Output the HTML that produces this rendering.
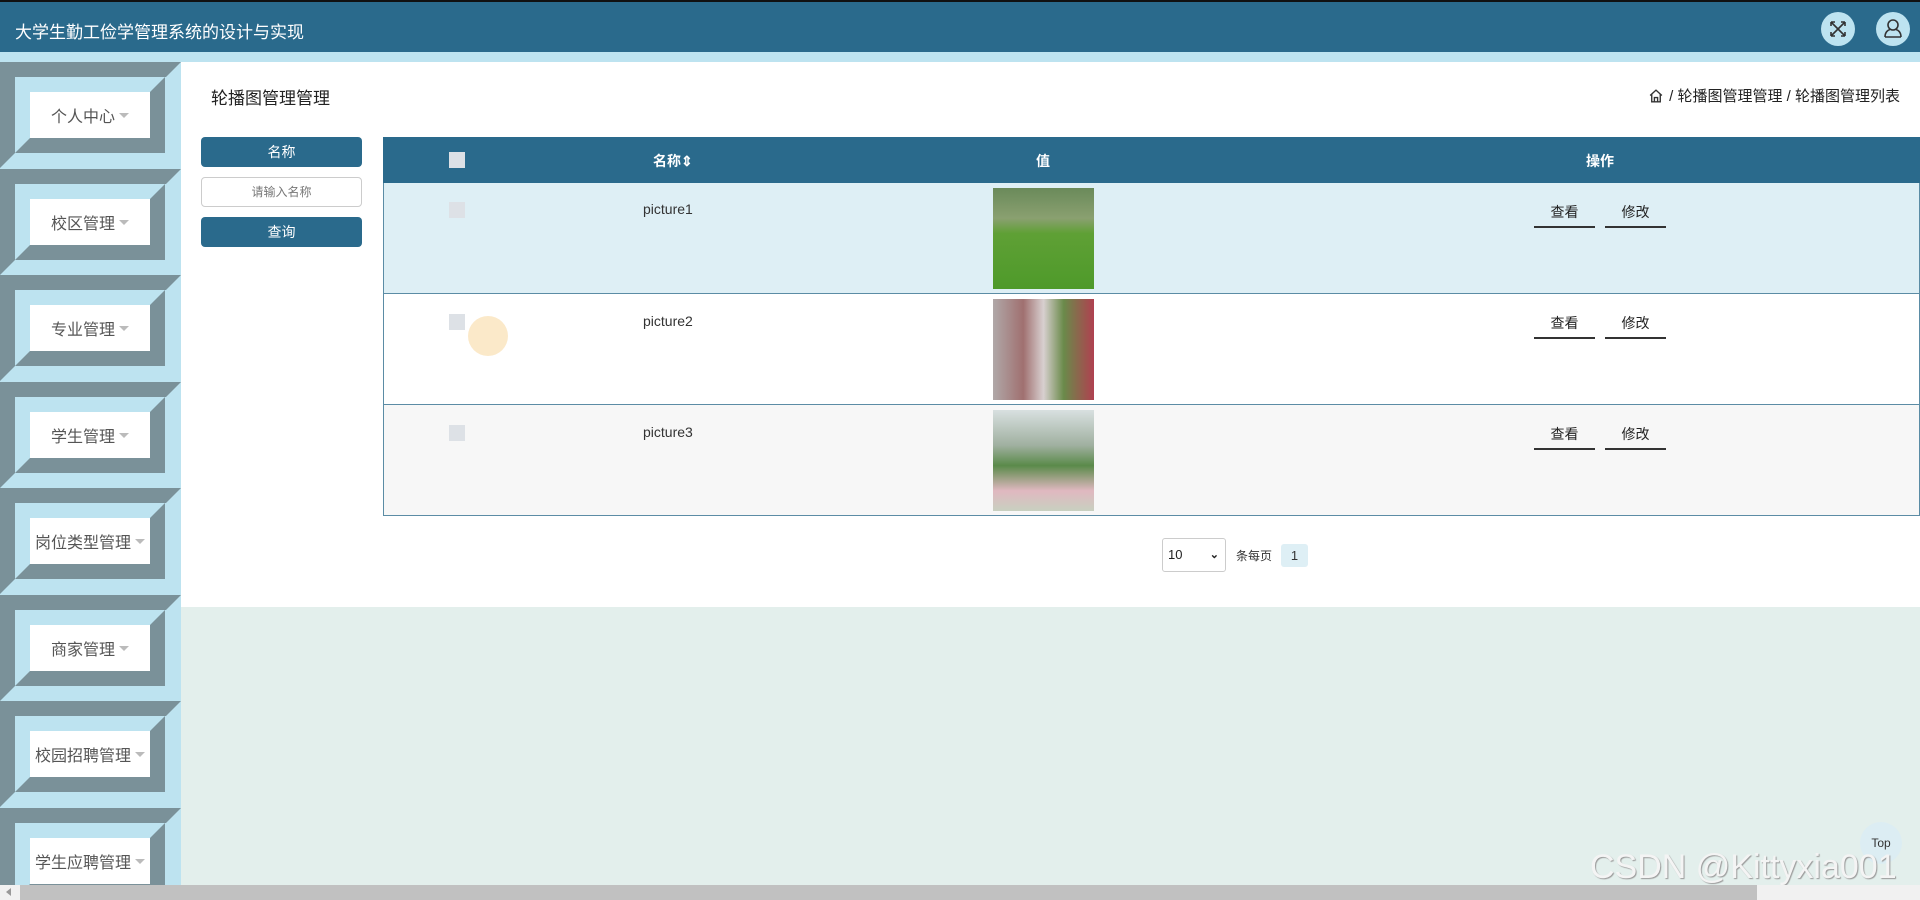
<!DOCTYPE html>
<html><head><meta charset="utf-8"><style>
*{margin:0;padding:0;box-sizing:border-box}
html{width:1920px;height:900px;overflow:hidden}
body{width:1920px;height:900px;overflow:hidden;background:#e3efec;font-family:"Liberation Sans","Noto Sans CJK SC",sans-serif;position:relative}
.abs{position:absolute}
.hdr{left:0;top:0;width:1920px;height:52px;background:#2a6a8c;border-top:2px solid #111}
.hdr .t{left:15px;top:16px;color:#fff;font-size:17px}
.circ{width:34px;height:34px;border-radius:50%;background:#bde3f0;top:12px}
.strip{left:0;top:52px;width:1920px;height:10px;background:#bde3f0}
.side{left:0;top:62px;width:181px;height:823px;background:#bde3f0;overflow:hidden}
.item{position:absolute;left:0;width:181px;height:106px;border-width:15px;border-style:solid;border-color:#7a9199 #bde3f0 #bde3f0 #7a9199}
.item .in{width:150px;height:76px;border-width:15px;border-style:solid;border-color:#bde3f0 #7a9199 #7a9199 #bde3f0}
.item .w{width:120px;height:46px;background:#fff;display:flex;align-items:center;justify-content:center;font-size:16px;color:#555;white-space:nowrap}
.car{display:inline-block;width:0;height:0;border-left:5px solid transparent;border-right:5px solid transparent;border-top:5px solid #bbb;margin-left:4px}
.main{left:181px;top:62px;width:1739px;height:545px;background:#fff}
.btn{left:201px;width:161px;height:30px;background:#2a6a8c;border-radius:4px;color:#fff;font-size:14px;text-align:center;line-height:30px}
.inp{left:201px;top:177px;width:161px;height:30px;border:1px solid #ccc;border-radius:4px;font-size:12px;color:#777;text-align:center;line-height:28px}
.th{left:383px;top:137px;width:1537px;height:46px;background:#2a6a8c;color:#fff;font-weight:bold;font-size:14px}
.row{left:383px;width:1537px;height:111px;border:1px solid #5b8ca5;border-top:none}
.cb{width:16px;height:16px;background:#dde1e6}
.txt{font-size:14px;color:#333}
.op{width:61px;height:29px;border-bottom:2px solid #333;font-size:14px;color:#222;text-align:center;line-height:26px}
.img{left:993px;width:101px;height:101px}
</style></head><body>
<div class="abs hdr"><div class="abs t">大学生勤工俭学管理系统的设计与实现</div></div>
<div class="abs circ" style="left:1821px">
<svg width="34" height="34" viewBox="0 0 34 34" fill="none" stroke="#333" stroke-width="1.6"><path d="M10 10L24 24M24 10L10 24M10 10h4M10 10v4M24 10h-4M24 10v4M10 24h4M10 24v-4M24 24h-4M24 24v-4"/></svg></div>
<div class="abs circ" style="left:1876px">
<svg width="34" height="34" viewBox="0 0 34 34" fill="none" stroke="#333" stroke-width="1.6"><circle cx="17" cy="13" r="5"/><path d="M9 25c0-5 3-7 5-7.5M25 25c0-5-3-7-5-7.5M9 25h16"/></svg></div>
<div class="abs strip"></div>
<div class="abs side">
<div class="item" style="top:0"><div class="in"><div class="w">个人中心<span class="car"></span></div></div></div>
<div class="item" style="top:107px"><div class="in"><div class="w">校区管理<span class="car"></span></div></div></div>
<div class="item" style="top:213px"><div class="in"><div class="w">专业管理<span class="car"></span></div></div></div>
<div class="item" style="top:320px"><div class="in"><div class="w">学生管理<span class="car"></span></div></div></div>
<div class="item" style="top:426px"><div class="in"><div class="w">岗位类型管理<span class="car"></span></div></div></div>
<div class="item" style="top:533px"><div class="in"><div class="w">商家管理<span class="car"></span></div></div></div>
<div class="item" style="top:639px"><div class="in"><div class="w">校园招聘管理<span class="car"></span></div></div></div>
<div class="item" style="top:746px"><div class="in"><div class="w">学生应聘管理<span class="car"></span></div></div></div>
</div>
<div class="abs main"></div>
<div class="abs" style="left:211px;top:84px;font-size:17px;color:#222">轮播图管理管理</div>
<div class="abs" style="right:20px;top:85px;font-size:15px;color:#222;display:flex;align-items:center;gap:5px">
<svg width="16" height="16" viewBox="0 0 15 15" fill="none" stroke="#333" stroke-width="1.3"><path d="M2 7L7.5 2 13 7M3.5 6v7h8V6M6 13V9h3v4"/></svg>
<span>/ 轮播图管理管理 / 轮播图管理列表</span></div>
<div class="abs btn" style="top:137px">名称</div>
<div class="abs inp">请输入名称</div>
<div class="abs btn" style="top:217px">查询</div>
<div class="abs th">
<div class="abs cb" style="left:66px;top:15px"></div>
<div class="abs" style="left:270px;top:14px">名称⇕</div>
<div class="abs" style="left:653px;top:14px">值</div>
<div class="abs" style="left:1203px;top:14px">操作</div>
</div>
<div class="abs row" style="top:183px;background:#deeff5"></div>
<div class="abs row" style="top:294px;background:#fff"></div>
<div class="abs row" style="top:405px;background:#f7f7f7"></div>
<div class="abs cb" style="left:449px;top:202px"></div>
<div class="abs cb" style="left:449px;top:314px"></div>
<div class="abs cb" style="left:449px;top:425px"></div>
<div class="abs" style="left:468px;top:316px;width:40px;height:40px;border-radius:50%;background:#fbe9c9"></div>
<div class="abs txt" style="left:643px;top:201px">picture1</div>
<div class="abs txt" style="left:643px;top:313px">picture2</div>
<div class="abs txt" style="left:643px;top:424px">picture3</div>
<div class="abs img" style="top:188px;background:linear-gradient(180deg,#6a8a5a 0%,#8aa070 30%,#5fa035 45%,#4e9a2a 100%)"></div>
<div class="abs img" style="top:299px;background:linear-gradient(90deg,#b0a8a8 0%,#a07070 30%,#d8d0d0 50%,#6a8a4a 70%,#b04050 100%)"></div>
<div class="abs img" style="top:410px;background:linear-gradient(180deg,#d8e0e0 0%,#a0b0a0 35%,#5a8a4a 55%,#e0b8c0 80%,#c8d0c0 100%)"></div>
<div class="abs op" style="left:1534px;top:199px">查看</div>
<div class="abs op" style="left:1605px;top:199px">修改</div>
<div class="abs op" style="left:1534px;top:310px">查看</div>
<div class="abs op" style="left:1605px;top:310px">修改</div>
<div class="abs op" style="left:1534px;top:421px">查看</div>
<div class="abs op" style="left:1605px;top:421px">修改</div>
<div class="abs" style="left:1162px;top:538px;width:64px;height:34px;border:1px solid #ccc;border-radius:3px;font-size:13px;color:#222;line-height:32px;padding-left:5px">10<span style="position:absolute;right:6px;top:0;font-size:11px;font-weight:bold">&#x2304;</span></div>
<div class="abs" style="left:1236px;top:547px;font-size:12px;color:#333">条每页</div>
<div class="abs" style="left:1281px;top:544px;width:27px;height:23px;background:#deeff5;border-radius:3px;font-size:13px;color:#333;text-align:center;line-height:23px">1</div>
<div class="abs" style="left:1860px;top:822px;width:42px;height:42px;border-radius:50%;background:#dcedf3;font-size:12px;color:#333;text-align:center;line-height:42px">Top</div>
<div class="abs" style="left:1590px;top:848px;font-size:34px;color:#f4f4f4;text-shadow:1px 1px 1px #999;font-family:'Liberation Sans',sans-serif">CSDN @Kittyxia001</div>
<div class="abs" style="left:0;top:885px;width:1920px;height:15px;background:#f1f1f1"></div>
<div class="abs" style="left:20px;top:885px;width:1737px;height:15px;background:#c1c1c1"></div>
<div class="abs" style="left:6px;top:888px;width:0;height:0;border-top:4px solid transparent;border-bottom:4px solid transparent;border-right:5px solid #999"></div>
</body></html>
